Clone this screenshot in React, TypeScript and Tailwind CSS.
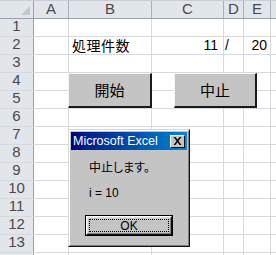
import React from "react";

const cols = [
  { w: "w-[34px]", label: "" },
  { w: "w-[35px]", label: "A" },
  { w: "w-[83px]", label: "B" },
  { w: "w-[72px]", label: "C" },
  { w: "w-[20px]", label: "D" },
  { w: "w-[27px]", label: "E" },
];

const rows = Array.from({ length: 14 }, (_, i) => i + 1);

const latin = "[font-family:'Liberation_Sans','Noto_Sans_CJK_JP',sans-serif]";

function Cell({ w, children, align }: { w: string; children?: React.ReactNode; align?: string }) {
  return (
    <div
      className={`${w} h-full shrink-0 border-r border-[#d6d9de] flex items-center ${align ?? "justify-start"} overflow-visible whitespace-nowrap`}
    >
      {children}
    </div>
  );
}

export default function App() {
  return (
    <div className="relative w-[276px] h-[255px] overflow-hidden bg-white text-black [font-family:'Noto_Sans_CJK_JP',sans-serif]">
      {/* header row */}
      <div className="flex h-[19px] bg-[#e2e5ea] border-b border-[#9aa3ae] border-t border-t-[#c9ced5]">
        <div className="relative w-[34px] h-full shrink-0 border-r border-[#9aa3ae]">
          <div className="absolute right-[3px] bottom-[3px] w-0 h-0 border-l-[9px] border-l-transparent border-b-[9px] border-b-[#c3c8cf]" />
        </div>
        {cols.slice(1).map((c) => (
          <div
            key={c.label}
            className={`${c.w} h-full shrink-0 border-r border-[#aab2bc] flex items-center justify-center text-[15px] font-light text-[#4a4a4a] ${latin}`}
          >
            {c.label}
          </div>
        ))}
        <div className="flex-1" />
      </div>
      {/* body rows */}
      {rows.map((r) => (
        <div key={r} className="flex h-[18px] border-b border-[#d6d9de]">
          <div className={`w-[34px] h-full shrink-0 bg-[#e2e5ea] border-r border-[#9aa3ae] flex items-center justify-center text-[15px] font-light text-[#4a4a4a] ${latin}`}>
            {r < 14 && <span className="relative top-[-1px]">{r}</span>}
          </div>
          <Cell w="w-[35px]" />
          <Cell w="w-[83px]">
            {r === 2 && <span className="pl-[3px] text-[14px] tracking-[0.5px]">処理件数</span>}
          </Cell>
          <Cell w="w-[72px]" align="justify-end">
            {r === 2 && <span className={`pr-[5px] text-[14px] ${latin}`}>11</span>}
          </Cell>
          <Cell w="w-[20px]">
            {r === 2 && <span className={`pl-[1px] text-[14px] ${latin}`}>/</span>}
          </Cell>
          <Cell w="w-[27px]" align="justify-end">
            {r === 2 && <span className={`pr-[3px] text-[14px] ${latin}`}>20</span>}
          </Cell>
          <div className="flex-1" />
        </div>
      ))}

      {/* sheet buttons */}
      <div className="absolute left-[68px] top-[73px] w-[84px] h-[35px] bg-[#c4c4c4] border-t border-l border-[#f4f4f4] border-r-2 border-b-2 border-r-[#1a1a1a] border-b-[#1a1a1a] flex items-center justify-center text-[15px]">
        開始
      </div>
      <div className="absolute left-[174px] top-[73px] w-[83px] h-[35px] bg-[#c4c4c4] border-t border-l border-[#f4f4f4] border-r-2 border-b-2 border-r-[#1a1a1a] border-b-[#1a1a1a] flex items-center justify-center text-[15px]">
        中止
      </div>

      {/* dialog */}
      <div className="absolute left-[68px] top-[129px] w-[122px] h-[118px] bg-[#c4c4c4] border border-t-[#d8d8d8] border-l-[#d8d8d8] border-r-[#111] border-b-[#111]">
        <div className="w-full h-full border border-t-white border-l-white border-r-[#7f7f7f] border-b-[#7f7f7f] p-[1px] flex flex-col">
          <div className="h-[18px] bg-gradient-to-r from-[#000080] to-[#1084d0] flex items-center justify-between pl-[2px] pr-[2px]">
            <span className={`text-white text-[12.5px] leading-none ${latin}`}>Microsoft Excel</span>
            <div className="w-[15px] h-[13px] bg-[#c4c4c4] border border-t-white border-l-white border-r-[#111] border-b-[#111] flex items-center justify-center">
              <svg width="9" height="8" viewBox="0 0 9 8">
                <path d="M0.5 0 L2.3 0 L4.5 2.6 L6.7 0 L8.5 0 L5.4 3.9 L8.5 8 L6.7 8 L4.5 5.2 L2.3 8 L0.5 8 L3.6 3.9 Z" fill="#000" />
              </svg>
            </div>
          </div>
          <div className="pl-[18px] pt-[10px] text-[12px] [font-feature-settings:'palt'] leading-[14px]">中止します。</div>
          <div className={`pl-[18px] pt-[12px] text-[12px] leading-[14px] ${latin}`}>i = 10</div>
          <div className="pl-[14px] pt-[15px]">
            <div className="w-[88px] h-[21px] border border-black">
              <div className="w-full h-full border border-t-white border-l-white border-r-[#111] border-b-[#111]">
                <div className="w-full h-full border border-t-[#e0e0e0] border-l-[#e0e0e0] border-r-[#7f7f7f] border-b-[#7f7f7f] p-[1px]">
                  <div className={`w-full h-full border border-dotted border-black flex items-center justify-center text-[12px] leading-none ${latin}`}>
                    OK
                  </div>
                </div>
              </div>
            </div>
          </div>
        </div>
      </div>
    </div>
  );
}
